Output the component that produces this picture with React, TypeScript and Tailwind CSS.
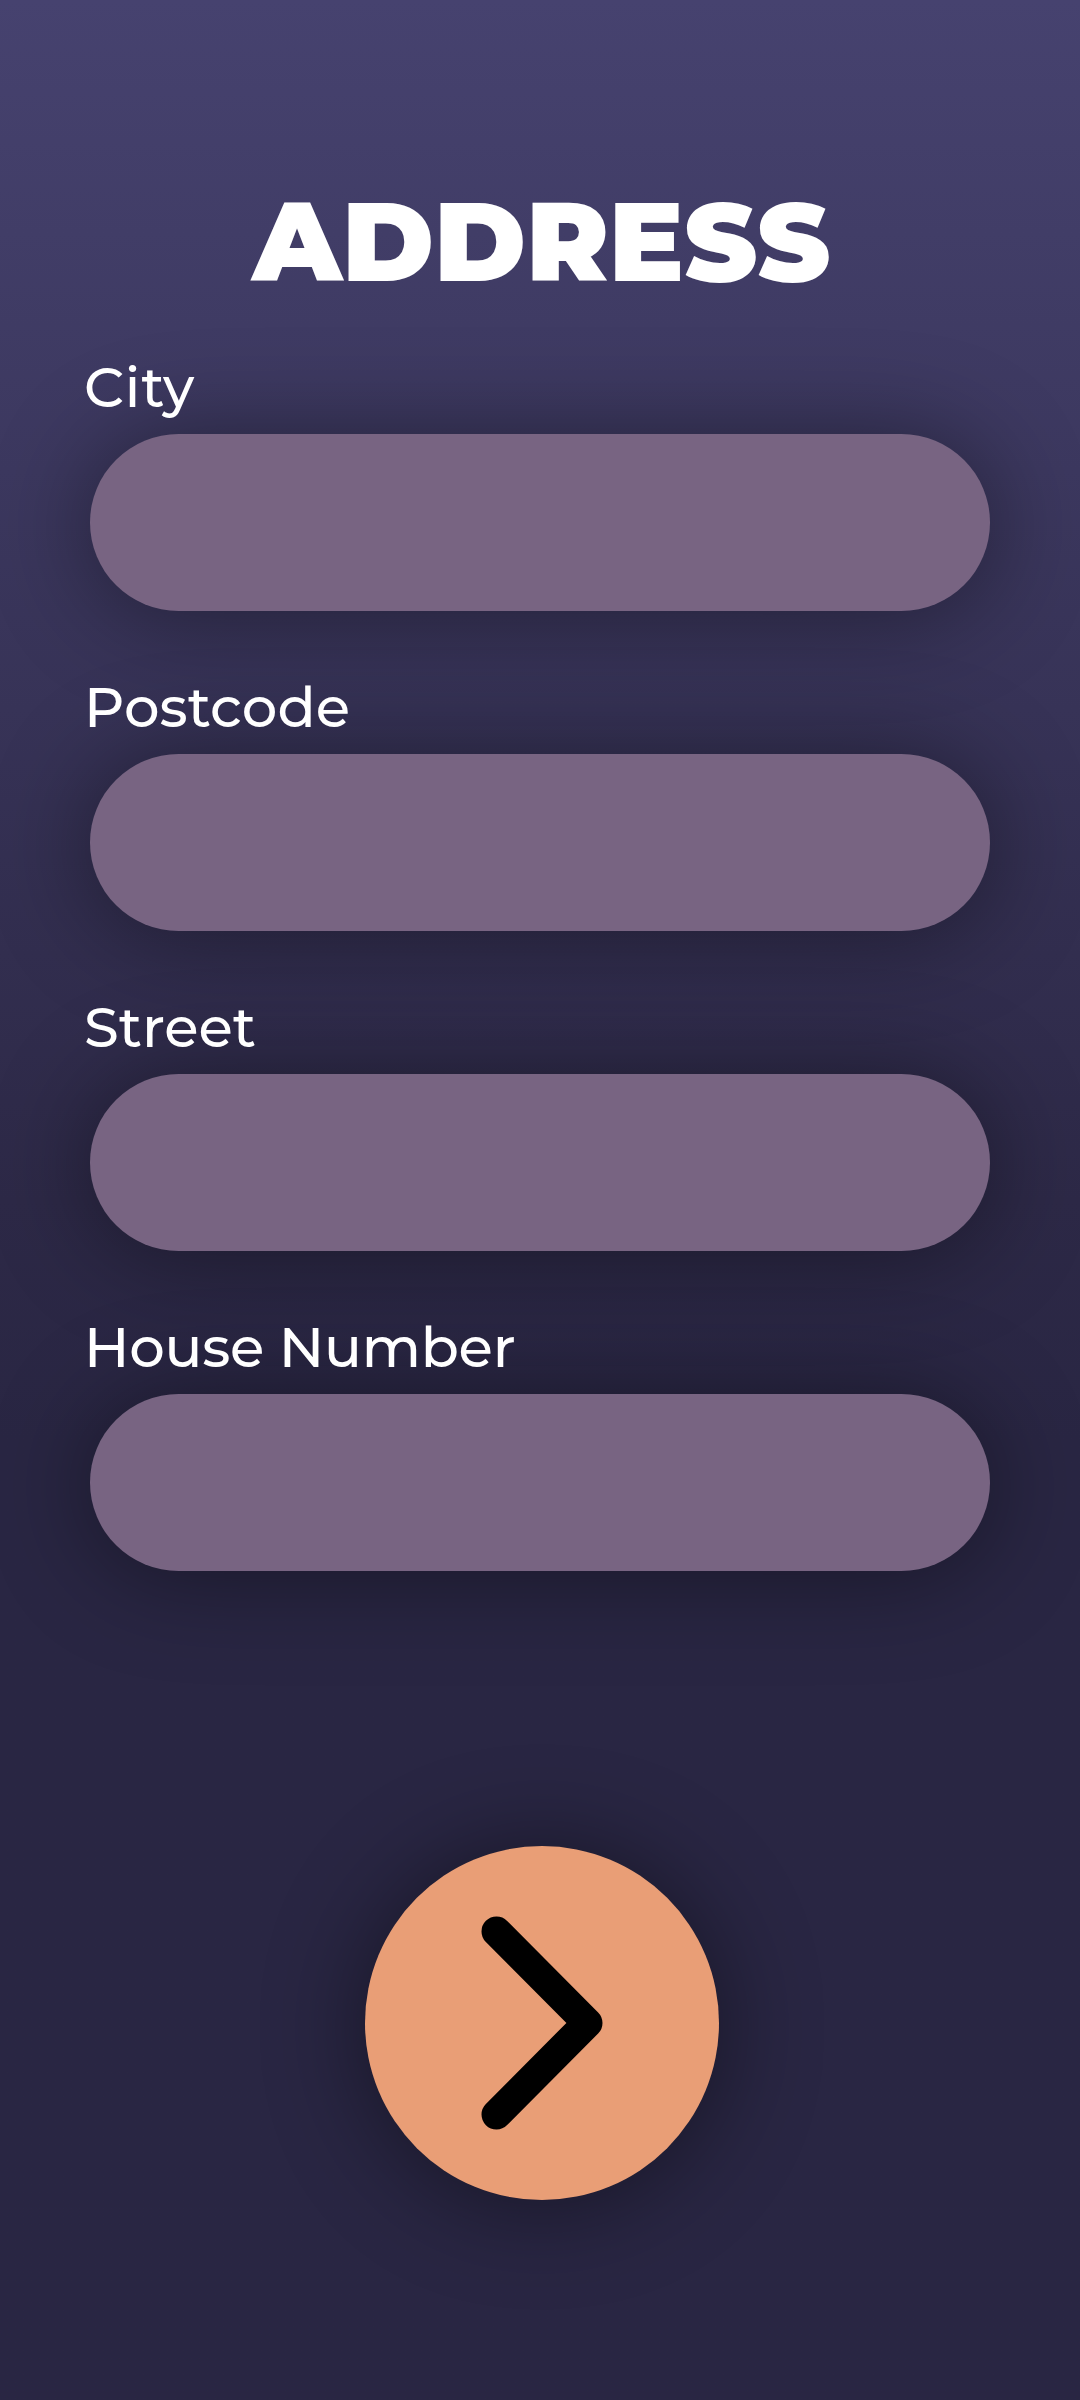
const fields = [
  { name: 'City', style: '-ml-[6px] tracking-[0.9px]' },
  { name: 'Postcode', style: '-ml-[6px] tracking-[0.15px]' },
  { name: 'Street', style: '-ml-[6px]' },
  { name: 'House Number', style: '-ml-[6px] tracking-[-0.25px]' },
];

export default function App() {
  return (
    <main className="flex h-[2400px] w-[1080px] flex-col overflow-hidden bg-linear-to-b from-[#46426f] from-0% via-[#2d2947] via-50% to-[#292643] to-60% font-[Montserrat,Inter,sans-serif] text-white">
      <h1 className="mt-[186px] pl-[3px] text-center text-[111px] leading-[112px] font-black tracking-[0.3px]">ADDRESS</h1>
      <form className="mt-[50px] flex flex-col gap-[57px] px-[90px]">
        {fields.map(({ name, style }) => (
          <label key={name} className="flex h-[263px] flex-col">
            <span className={`relative z-10 mb-2 text-[56px] leading-[78px] font-medium ${style}`}>{name}</span>
            <input className="relative h-[177px] w-[900px] rounded-full bg-[#786482] px-16 text-5xl shadow-[0_4px_100px_rgba(0,0,0,0.42)] outline-none" />
          </label>
        ))}
      </form>
      <button aria-label="Next" className="mt-[275px] ml-[365px] size-[354px] rounded-full bg-[#e99e76] shadow-[0_4px_100px_rgba(0,0,0,0.45)]">
        <svg width="354" height="354" fill="none" stroke="black" strokeWidth="30" strokeLinecap="round" strokeLinejoin="round"><path d="M131.5 85.5L222.5 177L131.5 268.5" /></svg>
      </button>
    </main>
  );
}
